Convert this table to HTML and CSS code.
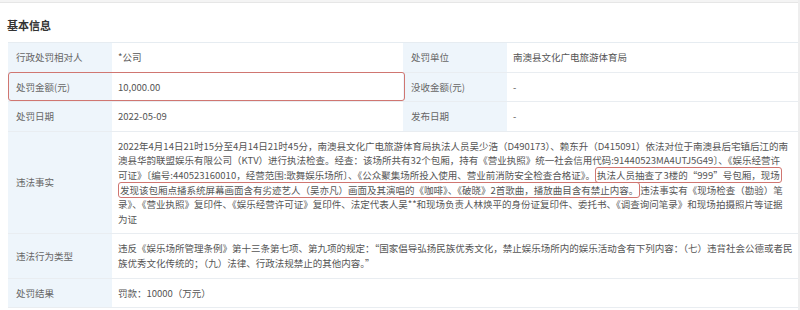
FILE: index.html
```html
<!DOCTYPE html>
<html lang="zh-CN">
<head>
<meta charset="utf-8">
<title>基本信息</title>
<link rel="stylesheet" href="styles.css">
</head>
<body>
<div class="page">
  <div class="topline"></div>
  <h2 class="title">基本信息</h2>
  <div class="info">
    <div class="lbl">行政处罚相对人</div>
    <div class="val">*公司</div>
    <div class="lbl">处罚单位</div>
    <div class="val">南澳县文化广电旅游体育局</div>

    <div class="lbl hl">处罚金额(元)</div>
    <div class="val">10,000.00</div>
    <div class="lbl">没收金额(元)</div>
    <div class="val">-</div>

    <div class="lbl">处罚日期</div>
    <div class="val">2022-05-09</div>
    <div class="lbl">发布日期</div>
    <div class="val">-</div>

    <div class="lbl">违法事实</div>
    <div class="val wide">2022年4月14日21时15分至4月14日21时45分，南澳县文化广电旅游体育局执法人员吴少浩（D490173）、赖东升（D415091）依法对位于南澳县后宅镇后江的南<br>澳县华韵联盟娱乐有限公司（KTV）进行执法检查。经查：该场所共有32个包厢，持有《营业执照》统一社会信用代码:91440523MA4UTJ5G49〕、《娱乐经营许<br>可证》〔编号:440523160010，经营范围:歌舞娱乐场所〕、《公众聚集场所投入使用、营业前消防安全检查合格证》。<span class="mark">执法人员抽查了3楼的“999”号包厢，现场<br>发现该包厢点播系统屏幕画面含有劣迹艺人（吴亦凡）画面及其演唱的《咖啡》、《破晓》2首歌曲，播放曲目含有禁止内容。</span>违法事实有《现场检查（勘验）笔<br>录》、《营业执照》复印件、《娱乐经营许可证》复印件、法定代表人吴**和现场负责人林焕平的身份证复印件、委托书、《调查询问笔录》和现场拍摄照片等证据<br>为证</div>

    <div class="lbl">违法行为类型</div>
    <div class="val wide">违反《娱乐场所管理条例》第十三条第七项、第九项的规定：“国家倡导弘扬民族优秀文化，禁止娱乐场所内的娱乐活动含有下列内容：（七）违背社会公德或者民<br>族优秀文化传统的；（九）法律、行政法规禁止的其他内容。”</div>

    <div class="lbl">处罚结果</div>
    <div class="val wide">罚款：10000（万元）</div>
  </div>
</div>
</body>
</html>
```

FILE: styles.css
```css
* { box-sizing: border-box; }

html, body {
  margin: 0;
  padding: 0;
  background: #ffffff;
}

body {
  font-family: "Noto Sans CJK SC", "Noto Sans", sans-serif;
  font-size: 9.5px;
  color: #555;
}

.page {
  width: 800px;
  height: 310px;
  overflow: hidden;
  border-right: 2px solid #eeeeee;
}

.topline {
  height: 3px;
  background: #f4f4f4;
  border-bottom: 1px solid #e6e6e6;
}

.title {
  margin: 0;
  padding: 14px 0 0 7px;
  height: 39px;
  font-size: 11px;
  font-weight: bold;
  color: #333;
  line-height: 16px;
}

.info {
  margin-left: 8px;
  width: 790px;
  display: grid;
  grid-template-columns: 104px 291px 104px 291px;
  border-top: 1px solid #e6ecf1;
}

.lbl,
.val {
  line-height: 14.6px;
  padding: 7px 6px;
  border-bottom: 1px solid #e9edf1;
  white-space: nowrap;
}

.lbl {
  background: #eef5fb;
  color: #666;
  padding-left: 8px;
  display: flex;
  align-items: center;
}

.val {
  color: #555;
}

.wide {
  grid-column: 2 / 5;
}

/* annotation box drawn over the label + value of the amount row */
.hl {
  position: relative;
}

.hl::after {
  content: "";
  position: absolute;
  left: 0;
  top: -1px;
  bottom: 0;
  width: 395px;
  border: 1px solid #d07671;
  border-radius: 3px;
  pointer-events: none;
  z-index: 1;
}

.mark {
  border: 1px solid #d07671;
  border-radius: 3px;
  padding: 0 1px;
  -webkit-box-decoration-break: clone;
  box-decoration-break: clone;
}
```
